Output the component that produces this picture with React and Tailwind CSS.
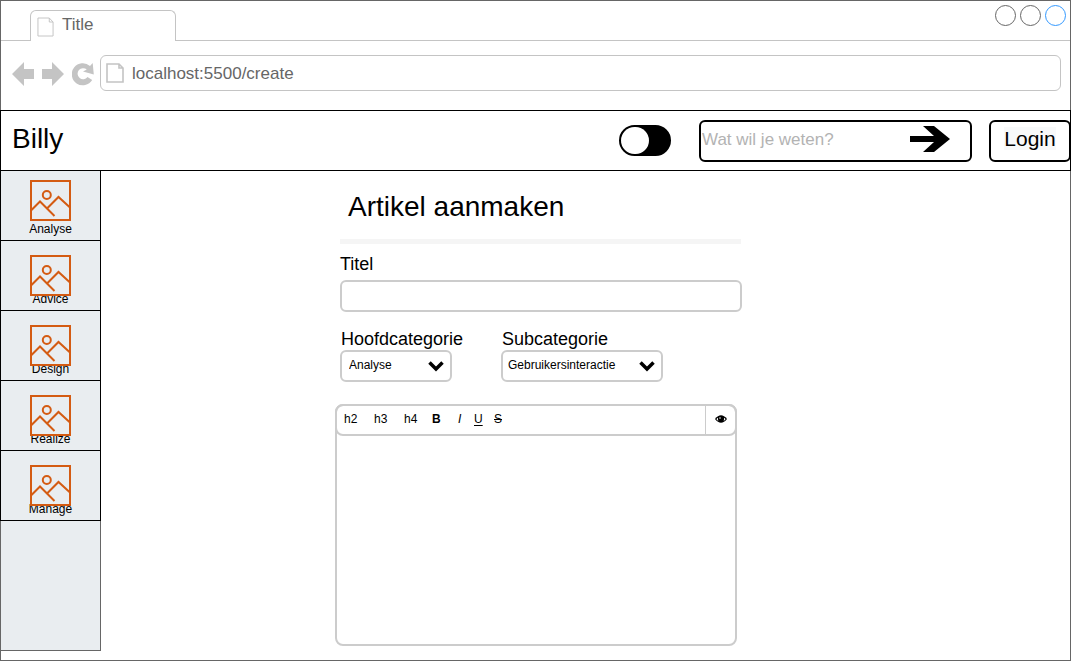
import React from "react";

const categories = ["Analyse", "Advice", "Design", "Realize", "Manage"];

function PageIcon({ className, strokeWidth }) {
  return (
    <svg className={className} viewBox="0 0 18 20" preserveAspectRatio="none" fill="none" stroke="#c4c4c4" strokeWidth={strokeWidth} aria-hidden="true">
      <path d="M1 1H13L17 5V19H1ZM13 1V5H17" />
    </svg>
  );
}

function PictureIcon() {
  return (
    <svg className="relative size-[41px] shrink-0" viewBox="0 0 41 41" fill="none" stroke="#d45b12" strokeWidth="2" aria-hidden="true">
      <rect x="1" y="1" width="39" height="39" />
      <circle cx="16.800" cy="15" r="4" />
      <path d="M1 30.500L10 21.500L24.500 36M17 28.500L28.500 17L40 27.500" />
    </svg>
  );
}

function BrowserBar() {
  return (
    <div className="text-[17px] leading-6 text-[#666666]">
      <div className="flex h-10 items-end justify-between border-b border-[#c4c4c4] pl-[29px] pr-1">
        <div className="-mb-px flex h-[31px] w-[146px] gap-2 rounded-t-md border border-b-0 border-[#c4c4c4] bg-white pl-1.5">
          <PageIcon className="mt-1.5 h-5 w-[17px]" strokeWidth="1" />
          <span className="pt-0.5">Title</span>
        </div>
        <div className="flex gap-1 self-start pt-1">
          <button aria-label="Minimize" className="size-[21px] rounded-full border border-[#666666]" />
          <button aria-label="Maximize" className="size-[21px] rounded-full border border-[#666666]" />
          <button aria-label="Close" className="size-[21px] rounded-full border border-[#3399ff]" />
        </div>
      </div>
      <div className="flex h-[69px] items-start px-[9px] pt-3.5">
        <div className="flex h-9 items-center gap-[7px] pl-0.5 pr-1.5 pt-0.5">
          <button aria-label="Back">
            <svg className="h-6 w-[23px]" viewBox="0 0 23 24" fill="#c4c4c4"><path d="M0 12L12 0V7H22V17H12V24Z" /></svg>
          </button>
          <button aria-label="Forward">
            <svg className="h-6 w-[23px]" viewBox="0 0 23 24" fill="#c4c4c4"><path d="M22 12L10 0V7H0V17H10V24Z" /></svg>
          </button>
          <button aria-label="Reload">
            <svg className="h-6 w-[22px]" viewBox="0 0 22 24" fill="#c4c4c4">
              <path d="M20.700 1L21.800 12.500L11 9.500L14.800 7.600A5.500 5.500 0 1 0 15.500 15L20.200 18A11 11 0 1 1 18 4Z" />
            </svg>
          </button>
        </div>
        <label className="flex h-9 flex-1 items-center gap-2 rounded-md border border-[#c4c4c4] pl-[5px]">
          <PageIcon className="h-5 w-[18px]" strokeWidth="1.6" />
          <input aria-label="Address" defaultValue="localhost:5500/create" className="min-w-0 flex-1 bg-transparent pt-0.5 outline-none" />
        </label>
      </div>
    </div>
  );
}

function Header() {
  return (
    <header className="-mx-px flex h-[61px] items-center border border-black pl-[11px]">
      <h1 className="mr-auto pb-1 text-[28px] leading-8">Billy</h1>
      <input
        type="checkbox"
        role="switch"
        aria-label="Theme"
        className="mr-7 h-[31px] w-[52px] appearance-none rounded-full border-2 border-black bg-black before:block before:h-[27px] before:w-7 before:rounded-full before:bg-white"
      />
      <form className="mr-[17px] flex h-[42px] w-[273px] items-center rounded-md border-2 border-black pb-0.5 pr-5">
        <input
          type="search"
          aria-label="Zoeken"
          placeholder="Wat wil je weten?"
          className="min-w-0 flex-1 bg-transparent pl-px text-[17px] outline-none placeholder:text-[#b3b3b3]"
        />
        <button type="button" aria-label="Zoek" className="pb-0.5">
          <svg className="h-[26px] w-10" viewBox="0 0 40 26"><path d="M0 10H24L13 0H24L40 13L24 26H13L24 16H0Z" /></svg>
        </button>
      </form>
      <button className="-mr-px h-[42px] w-[82px] rounded-md border-2 border-black pb-1 text-[21px] leading-6">
        <span className="bg-[#f8f9fa]">Login</span>
      </button>
    </header>
  );
}

function Sidebar() {
  return (
    <nav className="-ml-px -mt-px mb-[9px] w-[101px] shrink-0 border border-t-0 border-[#666666] bg-[#e9edf0]">
      {categories.map((name) => (
        <a
          key={name}
          href={"#" + name.toLowerCase()}
          className="group -mx-px -mb-px flex h-[71px] flex-col items-center justify-end border border-black pb-[3px] text-xs leading-4"
        >
          <span className="relative -mb-[5px] group-first:mb-0">
            <PictureIcon />
          </span>
          {name}
        </a>
      ))}
    </nav>
  );
}

function Select({ id, label, value, width, padding }) {
  return (
    <div className={width}>
      <label htmlFor={id} className="block pl-px text-lg leading-[22px]">{label}</label>
      <div className="grid items-center">
        <select
          id={id}
          className={"col-start-1 row-start-1 h-8 w-full appearance-none rounded-md border-2 border-[#cccccc] bg-white pb-0.5 text-xs outline-none " + padding}
        >
          <option>{value}</option>
        </select>
        <svg className="pointer-events-none col-start-1 row-start-1 mr-2 h-3 w-4 justify-self-end" viewBox="0 0 16 12" fill="none" stroke="#000" strokeWidth="3.500" aria-hidden="true">
          <path d="M1.500 2.500L8 9L14.500 2.500" />
        </svg>
      </div>
    </div>
  );
}

function Editor() {
  return (
    <section className="mr-[5px] mt-[22px] flex h-[242px] flex-col rounded-lg border-2 border-[#cccccc]">
      <div className="-mx-0.5 -mt-0.5 flex h-8 shrink-0 items-stretch rounded-lg border-2 border-[#cccccc] pl-[7px] text-xs">
        <div className="flex items-center pb-0.5">
          <button className="w-[30px] text-left">h2</button>
          <button className="w-[30px] text-left">h3</button>
          <button className="w-7 text-left">h4</button>
          <button className="w-[26px] text-left font-bold">B</button>
          <button className="w-4 text-left italic">I</button>
          <button className="w-5 text-left underline underline-offset-2">U</button>
          <button className="line-through">S</button>
        </div>
        <button aria-label="Voorbeeld" className="ml-auto flex w-[30px] items-center justify-center border-l border-[#cccccc] pb-0.5">
          <svg className="h-2 w-3" viewBox="0 0 12 8">
            <path d="M0 4Q6 -3.500 12 4Q6 11.500 0 4Z" />
            <path d="M1.500 4.200Q2 3.200 3 2.800Q2.600 4.500 3.400 5.700Q2.200 5.200 1.500 4.200ZM10.500 4.200Q10 3.200 9 2.800Q9.400 4.500 8.600 5.700Q9.800 5.200 10.500 4.200Z" fill="#fff" />
            <circle cx="5" cy="3" r=".8" fill="#fff" />
          </svg>
        </button>
      </div>
      <textarea aria-label="Inhoud" className="min-h-0 w-full flex-1 resize-none bg-transparent p-2 text-sm outline-none" />
    </section>
  );
}

export default function App() {
  return (
    <div className="mr-px flex min-h-screen flex-col border border-[#666666] bg-white font-['Liberation_Sans',Arial,sans-serif] text-black">
      <BrowserBar />
      <Header />
      <div className="flex flex-1">
        <Sidebar />
        <main className="ml-[234px] mr-4 w-full max-w-[407px] pb-3.5 pt-[18px]">
          <div className="pl-[5px]">
            <h2 className="pl-2 text-[28px] leading-9">Artikel aanmaken</h2>
            <hr className="mr-px mt-3.5 border-t-[5px] border-[#f5f5f5]" />
            <label htmlFor="title" className="mt-2 block text-lg leading-6">Titel</label>
            <input id="title" className="mt-1 block h-8 w-full rounded-md border-2 border-[#cccccc] px-2 text-sm outline-none" />
            <div className="mt-4 flex gap-[49px]">
              <Select id="main-category" label="Hoofdcategorie" value="Analyse" width="w-28" padding="pl-[7px]" />
              <Select id="sub-category" label="Subcategorie" value="Gebruikersinteractie" width="w-[162px]" padding="pl-[5px]" />
            </div>
          </div>
          <Editor />
        </main>
      </div>
    </div>
  );
}
